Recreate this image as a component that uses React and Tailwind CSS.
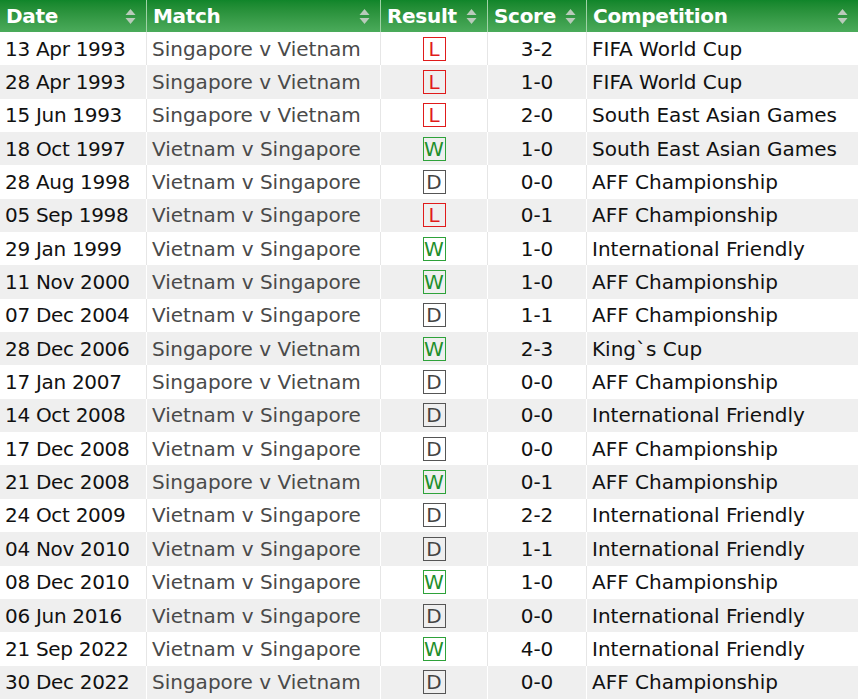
import React from "react";

const rows = [
  ["13 Apr 1993", "Singapore v Vietnam", "L", "3-2", "FIFA World Cup"],
  ["28 Apr 1993", "Singapore v Vietnam", "L", "1-0", "FIFA World Cup"],
  ["15 Jun 1993", "Singapore v Vietnam", "L", "2-0", "South East Asian Games"],
  ["18 Oct 1997", "Vietnam v Singapore", "W", "1-0", "South East Asian Games"],
  ["28 Aug 1998", "Vietnam v Singapore", "D", "0-0", "AFF Championship"],
  ["05 Sep 1998", "Vietnam v Singapore", "L", "0-1", "AFF Championship"],
  ["29 Jan 1999", "Vietnam v Singapore", "W", "1-0", "International Friendly"],
  ["11 Nov 2000", "Vietnam v Singapore", "W", "1-0", "AFF Championship"],
  ["07 Dec 2004", "Vietnam v Singapore", "D", "1-1", "AFF Championship"],
  ["28 Dec 2006", "Singapore v Vietnam", "W", "2-3", "King`s Cup"],
  ["17 Jan 2007", "Singapore v Vietnam", "D", "0-0", "AFF Championship"],
  ["14 Oct 2008", "Vietnam v Singapore", "D", "0-0", "International Friendly"],
  ["17 Dec 2008", "Vietnam v Singapore", "D", "0-0", "AFF Championship"],
  ["21 Dec 2008", "Singapore v Vietnam", "W", "0-1", "AFF Championship"],
  ["24 Oct 2009", "Vietnam v Singapore", "D", "2-2", "International Friendly"],
  ["04 Nov 2010", "Vietnam v Singapore", "D", "1-1", "International Friendly"],
  ["08 Dec 2010", "Vietnam v Singapore", "W", "1-0", "AFF Championship"],
  ["06 Jun 2016", "Vietnam v Singapore", "D", "0-0", "International Friendly"],
  ["21 Sep 2022", "Vietnam v Singapore", "W", "4-0", "International Friendly"],
  ["30 Dec 2022", "Singapore v Vietnam", "D", "0-0", "AFF Championship"],
];

const cols = "grid grid-cols-[147px_234px_107px_99px_271px]";

function SortIcon() {
  return (
    <svg width="11" height="17" viewBox="0 0 11 17" className="shrink-0">
      <path d="M5.5 1 L10.5 7 L0.5 7 Z" fill="#b9cbbb" />
      <path d="M5.5 16 L10.5 10 L0.5 10 Z" fill="#b9cbbb" />
    </svg>
  );
}

function Badge({ r }) {
  const cls =
    r === "L"
      ? "border-[#e01b1b] text-[#e01b1b]"
      : r === "W"
      ? "border-[#2ea23a] text-[#1f8f2c]"
      : "border-[#555] text-[#444]";
  return (
    <span
      className={`inline-flex h-[24px] w-[23px] items-center justify-center border leading-none ${cls}`}
    >
      {r}
    </span>
  );
}

export default function App() {
  return (
    <div
      className="w-[858px] h-[699px] bg-white overflow-hidden"
      style={{ fontFamily: '"DejaVu Sans", Verdana, sans-serif' }}
    >
      <div className={`${cols} h-[32px] bg-gradient-to-b from-[#10852a] to-[#4bab5b] text-white font-bold text-[20px]`}>
        {["Date", "Match", "Result", "Score", "Competition"].map((h, i) => (
          <div
            key={h}
            className={`flex items-center justify-between pl-[6px] pr-[10px] ${i < 4 ? "border-r border-[#9fd2a6]" : ""}`}
          >
            <span className="tracking-[-0.3px]">{h}</span>
            <SortIcon />
          </div>
        ))}
      </div>
      {rows.map((r, idx) => {
        const gray = idx % 2 === 1;
        const bd = gray ? "border-white" : "border-[#e6e6e6]";
        return (
          <div
            key={idx}
            className={`${cols} h-[33.35px] text-[20px] leading-none ${gray ? "bg-[#efefef]" : "bg-white"}`}
          >
            <div className={`flex items-center pl-[5px] text-[#111] tracking-[-0.3px] border-r ${bd}`}>{r[0]}</div>
            <div className={`flex items-center pl-[5px] text-[#4a4a4a] border-r ${bd}`}>{r[1]}</div>
            <div className={`flex items-center justify-center border-r ${bd}`}>
              <Badge r={r[2]} />
            </div>
            <div className={`flex items-center justify-center text-[#111] border-r ${bd}`}>{r[3]}</div>
            <div className="flex items-center pl-[5px] text-[#111]">{r[4]}</div>
          </div>
        );
      })}
    </div>
  );
}
